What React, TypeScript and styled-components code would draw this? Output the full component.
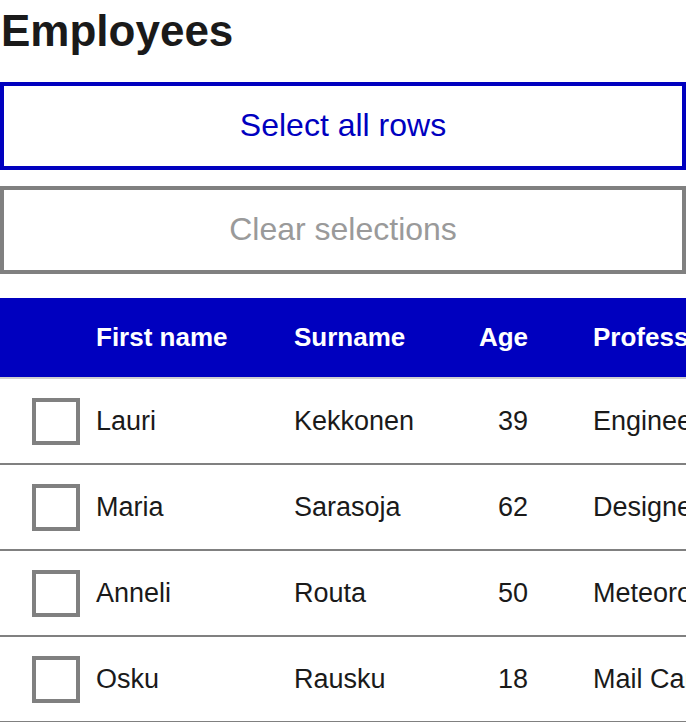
import React from "react";
import styled, { createGlobalStyle } from "styled-components";

const Global = createGlobalStyle`
  html, body { margin: 0; padding: 0; background: #fff; overflow: hidden; }
  body { font-family: "Liberation Sans", Arial, sans-serif; color: #1a1a1a; }
`;

const Page = styled.div`
  width: 686px;
  padding-top: 4px;
  overflow: hidden;
`;

const Heading = styled.h1`
  margin: 0 0 25px 1px;
  font-size: 44px;
  line-height: 53px;
  font-weight: 700;
  color: #1a1a1a;
`;

const Actions = styled.div`
  display: flex;
  flex-direction: column;
  gap: 16px;
  margin-bottom: 24px;
`;

const ActionButton = styled.button<{ $disabled?: boolean }>`
  box-sizing: border-box;
  width: 686px;
  height: 88px;
  margin: 0;
  padding: 0 0 2px;
  display: flex;
  align-items: center;
  justify-content: center;
  background: #fff;
  border: 4px solid ${(p) => (p.$disabled ? "#808080" : "#0000bf")};
  color: ${(p) => (p.$disabled ? "#9a9a9a" : "#0000bf")};
  font-family: "Liberation Sans", Arial, sans-serif;
  font-size: 32px;
  font-weight: 400;
  cursor: ${(p) => (p.$disabled ? "not-allowed" : "pointer")};
`;

const TableWrap = styled.div`
  width: 686px;
  overflow: hidden;
`;

const Table = styled.table`
  width: 900px;
  border-collapse: collapse;
  table-layout: fixed;
`;

const HeadRow = styled.tr`
  height: 80px;
  background: #0000bf;
  border-bottom: 2px solid #d0d0d0;
`;

const HeadCell = styled.th<{ $align?: string; $pl?: number; $pr?: number }>`
  box-sizing: border-box;
  padding: 0 ${(p) => p.$pr ?? 16}px 0 ${(p) => p.$pl ?? 16}px;
  text-align: ${(p) => p.$align ?? "left"};
  color: #fff;
  font-size: 26px;
  font-weight: 700;
  white-space: nowrap;
`;

const BodyRow = styled.tr`
  height: 86px;
  border-bottom: 2px solid #808080;
`;

const Cell = styled.td<{ $align?: string; $pl?: number; $pr?: number }>`
  box-sizing: border-box;
  padding: 0 ${(p) => p.$pr ?? 16}px 0 ${(p) => p.$pl ?? 16}px;
  text-align: ${(p) => p.$align ?? "left"};
  font-size: 27px;
  color: #1a1a1a;
  white-space: nowrap;
  vertical-align: middle;
`;

const CheckBox = styled.input`
  appearance: none;
  -webkit-appearance: none;
  display: block;
  box-sizing: border-box;
  width: 48px;
  height: 47px;
  margin: 0;
  border: 4px solid #808080;
  background: #fff;
`;

const rows = [
  { first: "Lauri", last: "Kekkonen", age: 39, job: "Engineer" },
  { first: "Maria", last: "Sarasoja", age: 62, job: "Designer" },
  { first: "Anneli", last: "Routa", age: 50, job: "Meteorologist" },
  { first: "Osku", last: "Rausku", age: 18, job: "Mail Carrier" },
];

export default function App() {
  return (
    <>
      <Global />
      <Page>
        <Heading>Employees</Heading>
        <Actions>
          <ActionButton type="button">Select all rows</ActionButton>
          <ActionButton type="button" $disabled>
            Clear selections
          </ActionButton>
        </Actions>
        <TableWrap>
          <Table>
            <colgroup>
              <col style={{ width: 80 }} />
              <col style={{ width: 198 }} />
              <col style={{ width: 180 }} />
              <col style={{ width: 102 }} />
              <col style={{ width: 340 }} />
            </colgroup>
            <thead>
              <HeadRow>
                <HeadCell $pl={32} $pr={0} aria-label="Selection" />
                <HeadCell>First name</HeadCell>
                <HeadCell>Surname</HeadCell>
                <HeadCell $align="right" $pr={32}>
                  Age
                </HeadCell>
                <HeadCell $pl={33}>Profession</HeadCell>
              </HeadRow>
            </thead>
            <tbody>
              {rows.map((r) => (
                <BodyRow key={r.first}>
                  <Cell $pl={32} $pr={0}>
                    <CheckBox type="checkbox" aria-label={`Select ${r.first}`} />
                  </Cell>
                  <Cell>{r.first}</Cell>
                  <Cell>{r.last}</Cell>
                  <Cell $align="right" $pr={32}>
                    {r.age}
                  </Cell>
                  <Cell $pl={33}>{r.job}</Cell>
                </BodyRow>
              ))}
            </tbody>
          </Table>
        </TableWrap>
      </Page>
    </>
  );
}
